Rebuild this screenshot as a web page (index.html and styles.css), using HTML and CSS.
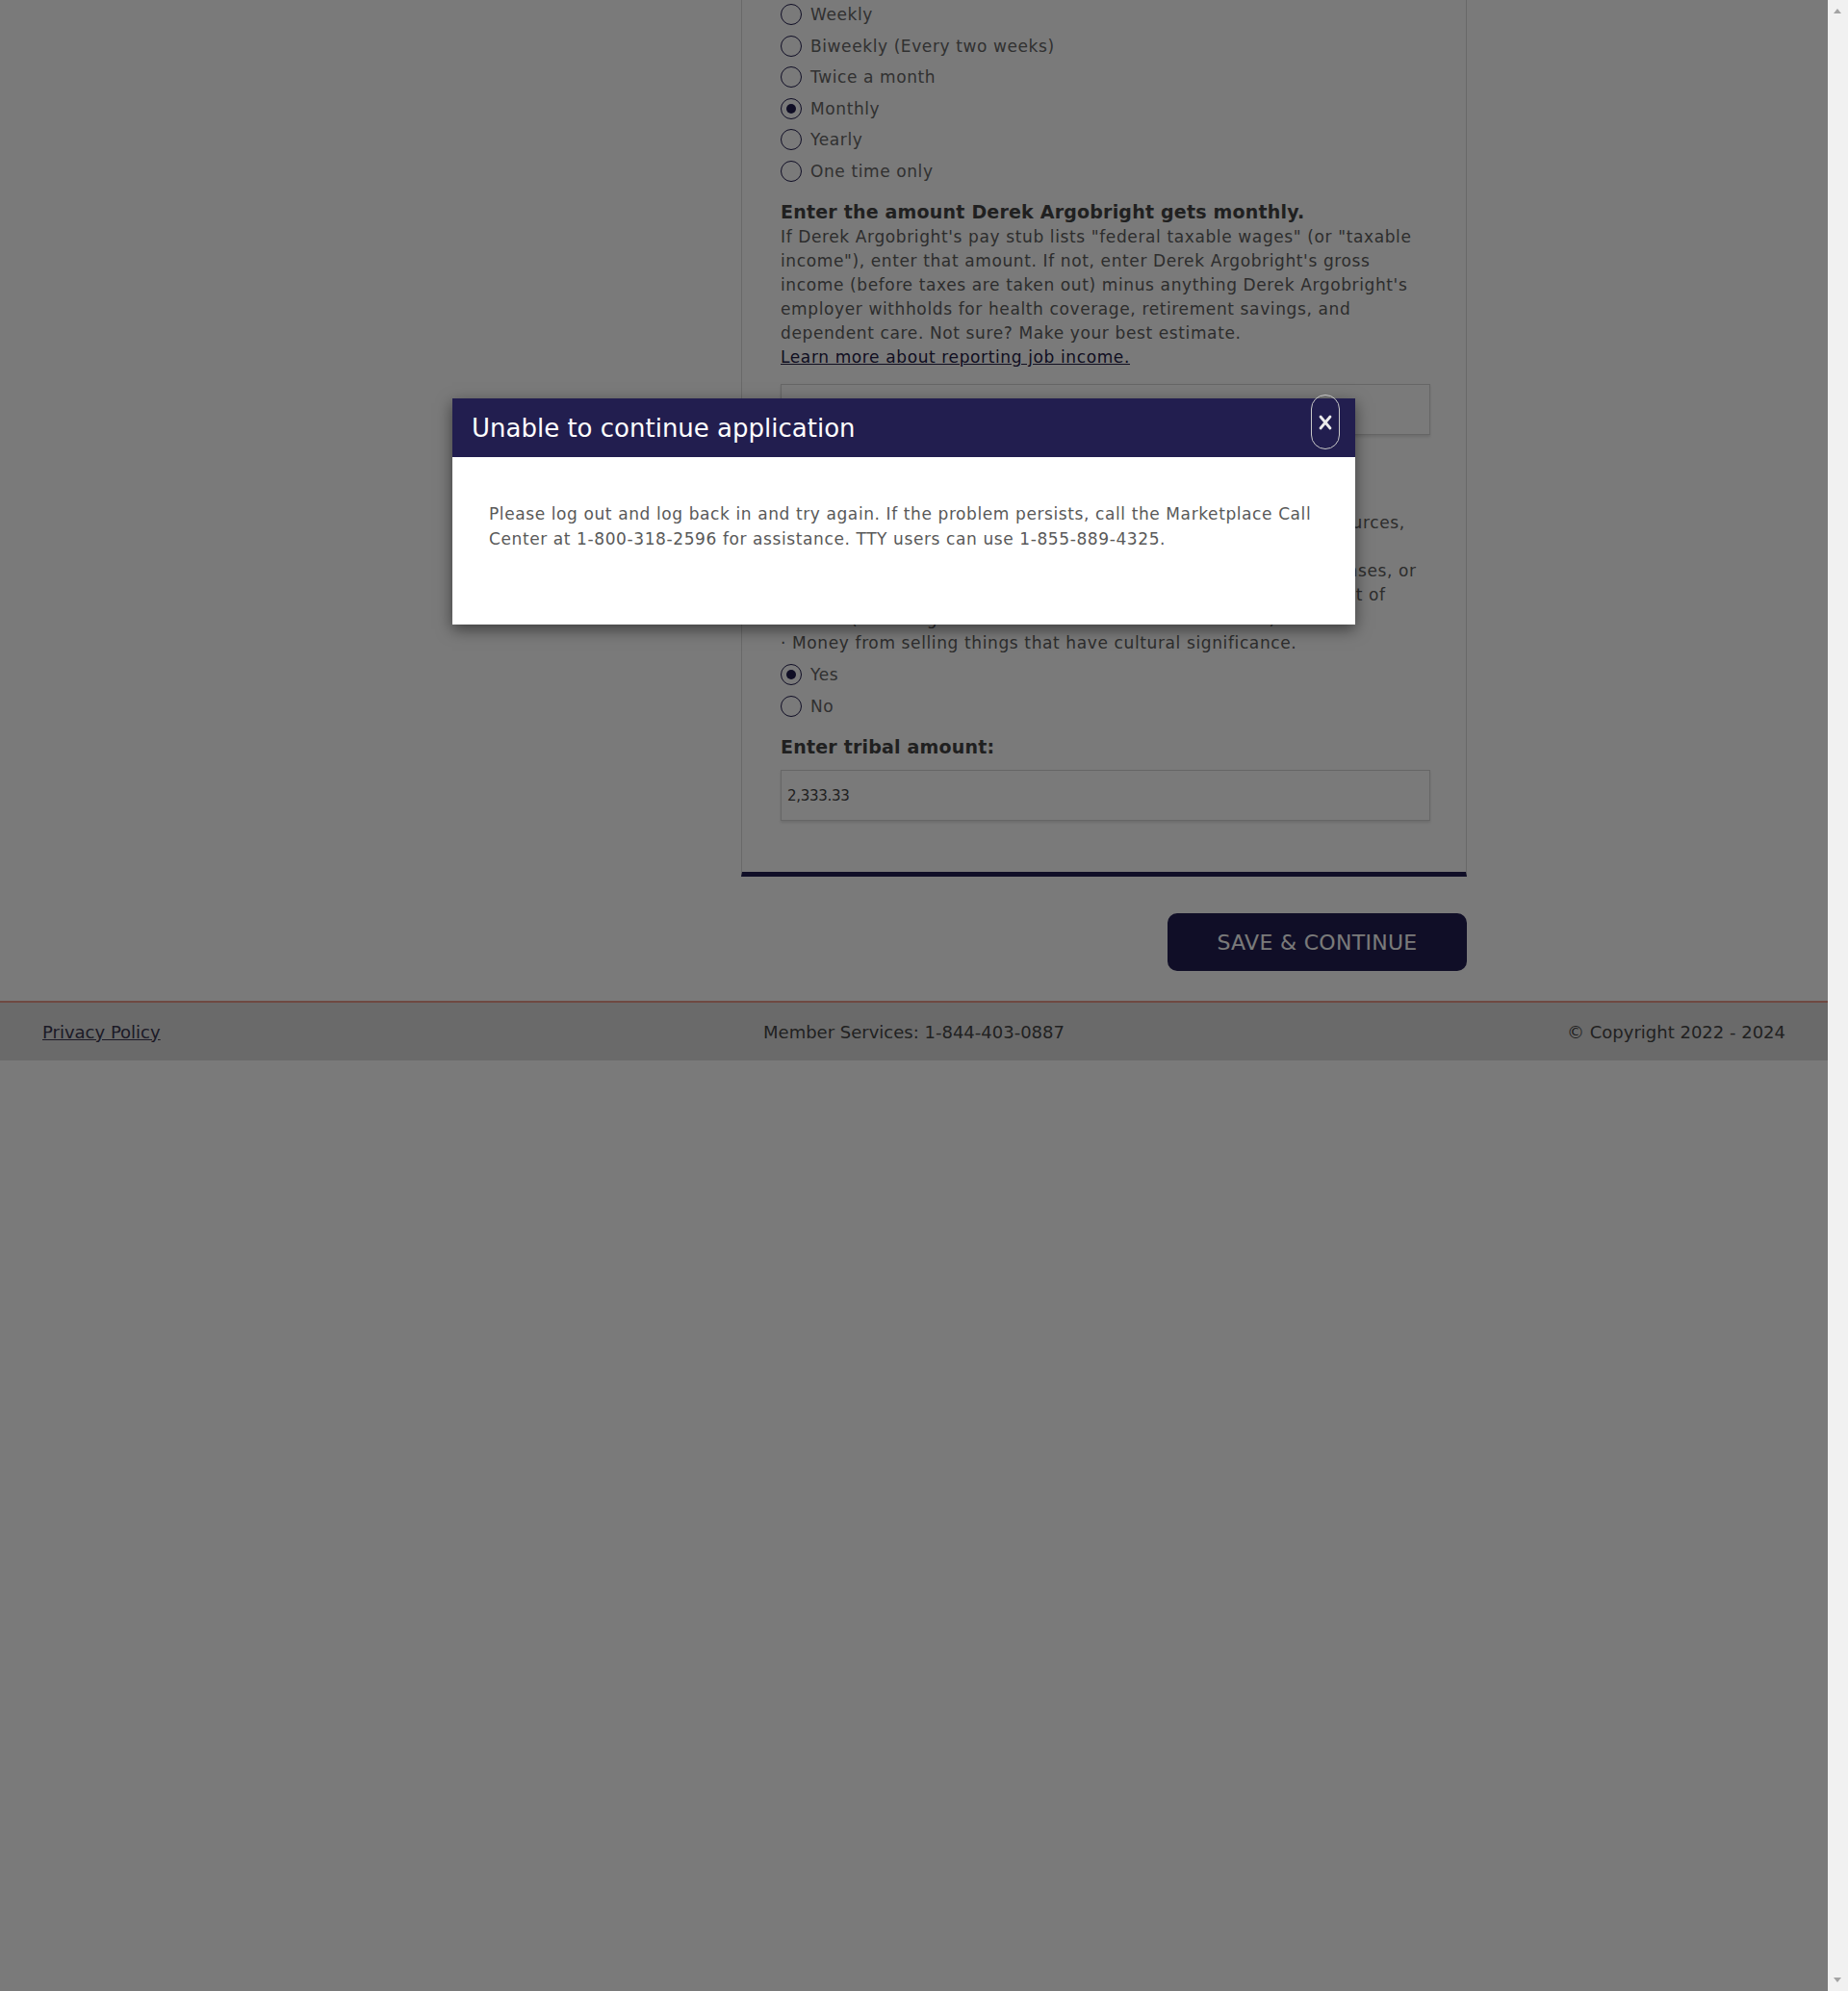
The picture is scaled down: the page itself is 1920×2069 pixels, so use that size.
FILE: index.html
```html
<!DOCTYPE html>
<html lang="en">
<head>
<meta charset="utf-8">
<title>Income details</title>
<link rel="stylesheet" href="styles.css">
</head>
<body>
<div class="window">
  <div class="page">
    <div class="layout">
      <aside class="side"></aside>
      <section class="main">
        <div class="card">
          <div class="radios radios-freq">
            <div class="radio"><span class="dot"></span><span class="lbl">Weekly</span></div>
            <div class="radio"><span class="dot"></span><span class="lbl">Biweekly (Every two weeks)</span></div>
            <div class="radio"><span class="dot"></span><span class="lbl">Twice a month</span></div>
            <div class="radio checked"><span class="dot"></span><span class="lbl">Monthly</span></div>
            <div class="radio"><span class="dot"></span><span class="lbl">Yearly</span></div>
            <div class="radio"><span class="dot"></span><span class="lbl">One time only</span></div>
          </div>
          <h3 class="q">Enter the amount Derek Argobright gets monthly.</h3>
          <p class="help">If Derek Argobright's pay stub lists "federal taxable wages" (or "taxable income"), enter that amount. If not, enter Derek Argobright's gross income (before taxes are taken out) minus anything Derek Argobright's employer withholds for health coverage, retirement savings, and dependent care. Not sure? Make your best estimate.<br><a href="#" class="link">Learn more about reporting job income.</a></p>
          <div class="field"></div>

          <h3 class="q q-tribal">Is any of this income from these sources?</h3>
          <p class="help">· Per capita payments from the tribe that come from natural resources, usage rights, leases, or royalties.<br>· Payments from natural resources, farming, ranching, fishing, leases, or royalties from land designated as Indian trust land by Department of Interior (including reservations and former reservations).<br>· Money from selling things that have cultural significance.</p>
          <div class="radios radios-yn">
            <div class="radio checked"><span class="dot"></span><span class="lbl">Yes</span></div>
            <div class="radio"><span class="dot"></span><span class="lbl">No</span></div>
          </div>
          <h3 class="q">Enter tribal amount:</h3>
          <div class="field field-last"><span class="val">2,333.33</span></div>
        </div>
        <div class="actions">
          <button class="btn">SAVE &amp; CONTINUE</button>
        </div>
      </section>
    </div>
    <footer class="foot">
      <a href="#" class="foot-link">Privacy Policy</a>
      <span class="foot-mid">Member Services: 1-844-403-0887</span>
      <span class="foot-right">© Copyright 2022 - 2024</span>
    </footer>
    <div class="overlay"></div>
    <div class="modal">
      <div class="modal-head">
        <h2 class="modal-title">Unable to continue application</h2>
        <button class="close" aria-label="Close">
          <svg width="14" height="16" viewBox="0 0 14 16"><path d="M2 2 L12 14 M12 2 L2 14" stroke="#ececec" stroke-width="2.8" stroke-linecap="round"/></svg>
        </button>
      </div>
      <div class="modal-body">
        <p>Please log out and log back in and try again. If the problem persists, call the Marketplace Call Center at 1-800-318-2596 for assistance. TTY users can use 1-855-889-4325.</p>
      </div>
    </div>
  </div>
  <div class="scrollbar">
    <span class="arr up"></span>
    <span class="arr down"></span>
  </div>
</div>
</body>
</html>
```

FILE: styles.css
```css
html, body {
  margin: 0;
  padding: 0;
  height: 2069px;
  overflow: hidden;
  background: #fff;
}
body {
  font-family: "DejaVu Sans", "Noto Sans", sans-serif;
  color: #5c5c5c;
}
.window {
  display: flex;
  height: 2069px;
}
.page {
  position: relative;
  width: 1899px;
  height: 2069px;
  background: #fff;
}
.layout {
  display: grid;
  grid-template-columns: 770px 754px;
}
.card {
  border-left: 1px solid #dcdcdc;
  border-right: 1px solid #dcdcdc;
  border-bottom: 5px solid #231f52;
  padding: 0 37px 53px 40px;
}
.radios {
  display: flex;
  flex-direction: column;
}
.radios-freq {
  margin-top: -1px;
}
.radio {
  height: 32.5px;
  display: flex;
  align-items: center;
  gap: 9px;
}
.dot {
  width: 20px;
  height: 20px;
  border: 1.5px solid #221e4f;
  border-radius: 50%;
  display: flex;
  align-items: center;
  justify-content: center;
  flex: none;
}
.radio.checked .dot::after {
  content: "";
  width: 10px;
  height: 10px;
  border-radius: 50%;
  background: #221e4f;
}
.lbl {
  font-size: 17px;
  letter-spacing: 0.6px;
  color: #666;
}
.q {
  margin: 12px 0 0;
  font-size: 19px;
  letter-spacing: 0.2px;
  line-height: 28px;
  font-weight: 700;
  color: #444;
}
.help {
  margin: 0;
  font-size: 17px;
  letter-spacing: 0.62px;
  line-height: 25px;
  color: #5e5e5e;
}
.link {
  color: #242046;
  text-decoration: underline;
}
.field {
  margin-top: 15px;
  height: 51px;
  border: 1px solid #d6d6d6;
  box-shadow: 0 2px 3px rgba(0,0,0,0.12);
  display: flex;
  align-items: center;
  padding-left: 6px;
}
.val {
  font-size: 15px;
  letter-spacing: -0.3px;
  color: #444;
}
.q-tribal {
  margin-top: 51px;
}
.radios-yn {
  margin-top: 4px;
}
.field-last {
  margin-top: 10px;
}
.actions {
  display: flex;
  justify-content: flex-end;
  margin-top: 38px;
}
.btn {
  width: 311px;
  height: 60px;
  border: none;
  border-radius: 10px;
  background: #231f52;
  color: #fff;
  font-family: inherit;
  font-size: 22px;
  letter-spacing: 0.3px;
}
.foot {
  margin-top: 31px;
  border-top: 2px solid #e89a8a;
  background: #dedede;
  height: 60px;
  display: grid;
  grid-template-columns: 1fr auto 1fr;
  align-items: center;
  padding: 0 44px;
  font-size: 18px;
  color: #464646;
}
.foot-link {
  justify-self: start;
  color: #3b3850;
  text-decoration: underline;
}
.foot-right {
  justify-self: end;
}
.overlay {
  position: absolute;
  inset: 0;
  background: rgba(0,0,0,0.52);
}
.modal {
  position: absolute;
  left: 470px;
  top: 414px;
  width: 938px;
  background: #fff;
  box-shadow: 0 5px 15px rgba(0,0,0,0.5);
}
.modal-head {
  position: relative;
  height: 61px;
  background: #221e4f;
  display: flex;
  align-items: center;
  padding-left: 20px;
}
.modal-title {
  margin: 0;
  font-size: 26px;
  font-weight: 400;
  color: #fff;
}
.close {
  position: absolute;
  right: 16px;
  top: -4px;
  width: 30px;
  height: 57px;
  border: 1.5px solid #c8c8c8;
  border-radius: 15px;
  background: transparent;
  display: flex;
  align-items: center;
  justify-content: center;
  padding: 0;
}
.modal-body {
  padding: 46px 38px 76px;
}
.modal-body p {
  margin: 0;
  font-size: 17px;
  letter-spacing: 0.6px;
  line-height: 26px;
  color: #595959;
}
.scrollbar {
  position: relative;
  width: 21px;
  height: 2069px;
  background: #f1f1f1;
}
.arr {
  position: absolute;
  left: 6px;
  width: 0;
  height: 0;
  border-left: 4.5px solid transparent;
  border-right: 4.5px solid transparent;
}
.arr.up {
  top: 9px;
  border-bottom: 5px solid #a3a3a3;
}
.arr.down {
  bottom: 9px;
  border-top: 5px solid #a3a3a3;
}
```
